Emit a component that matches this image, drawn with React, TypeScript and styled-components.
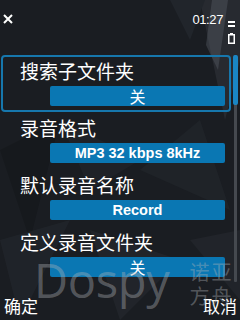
import React from "react";
import styled, { createGlobalStyle } from "styled-components";

const GlobalStyle = createGlobalStyle`
  html, body {
    margin: 0;
    padding: 0;
    background: #15181c;
  }
  * {
    box-sizing: border-box;
  }
`;

const Screen = styled.div`
  position: relative;
  width: 240px;
  height: 320px;
  overflow: hidden;
  background: #1a1d22;
  display: flex;
  flex-direction: column;
  font-family: "Noto Sans CJK SC", "Liberation Sans", sans-serif;
  color: #fff;
`;

const Backdrop = styled.svg`
  position: absolute;
  left: 0;
  top: 0;
  width: 240px;
  height: 320px;
  z-index: 0;
`;

const StatusBar = styled.div`
  position: relative;
  z-index: 1;
  height: 55px;
  display: flex;
  align-items: flex-start;
  padding: 14px 5px 0 3px;
`;

const Spacer = styled.div`
  flex: 1;
`;

const Clock = styled.div`
  font-family: "Liberation Sans", Arial, sans-serif;
  font-size: 13px;
  line-height: 13px;
  letter-spacing: -0.4px;
  margin-top: -1px;
`;

const Indicators = styled.div`
  display: flex;
  flex-direction: column;
  align-items: center;
  gap: 2px;
  margin-left: 5px;
  margin-top: 7px;
  width: 7px;
`;

const Bar = styled.span`
  display: block;
  width: 7px;
  height: 2px;
  background: #fff;
`;

const Body = styled.div`
  position: relative;
  z-index: 1;
  height: 228px;
  display: flex;
`;

const List = styled.div`
  width: 232px;
  padding-left: 1px;
  display: flex;
  flex-direction: column;
`;

const Item = styled.div<{ $selected?: boolean }>`
  width: 230px;
  height: 57px;
  border: 2px solid ${(p) => (p.$selected ? "#1677ad" : "transparent")};
  border-radius: 4px;
  padding: 4px 4px 0 17px;
  display: flex;
  flex-direction: column;
`;

const Label = styled.div`
  font-size: 19px;
  line-height: 19px;
  white-space: nowrap;
`;

const Value = styled.div<{ $latin?: boolean }>`
  margin: 6px 0 0 30px;
  width: 175px;
  height: 20px;
  border-radius: 2px;
  background: #0a77b3;
  text-align: center;
  line-height: 20px;
  font-family: ${(p) =>
    p.$latin
      ? `"Liberation Sans", Arial, sans-serif`
      : `"Noto Sans CJK SC", sans-serif`};
  font-size: ${(p) => (p.$latin ? "14.5px" : "16px")};
  font-weight: ${(p) => (p.$latin ? 700 : 400)};
`;

const ScrollTrack = styled.div`
  position: relative;
  margin-left: 1px;
  width: 5px;
  height: 227px;
  display: flex;
  justify-content: center;
`;

const TrackLine = styled.div`
  width: 3px;
  height: 100%;
  background: #45494f;
  border-radius: 1px;
`;

const Thumb = styled.div`
  position: absolute;
  left: 0;
  top: 0;
  width: 5px;
  height: 50px;
  border-radius: 2px;
  background: #1a86c4;
`;

const SoftKeys = styled.div`
  position: relative;
  z-index: 1;
  flex: 1;
  display: flex;
  align-items: flex-end;
  justify-content: space-between;
  padding: 0 3px 6px 4px;
  font-size: 17px;
  line-height: 17px;
`;

const Watermark = styled.div`
  position: absolute;
  z-index: 2;
  left: 34px;
  top: 255px;
  display: flex;
  align-items: flex-start;
  gap: 20px;
  color: rgba(175, 178, 182, 0.4);
  pointer-events: none;
`;

const WaterLogo = styled.div`
  font-family: "Open Sans", sans-serif;
  font-size: 47px;
  line-height: 50px;
  letter-spacing: -0.3px;
`;

const WaterChinese = styled.div`
  margin-top: 5px;
  font-size: 20px;
  line-height: 24px;
  width: 46px;
  letter-spacing: 2px;
`;

const CloseIcon = () => (
  <svg width="10" height="10" viewBox="0 0 10 10">
    <path d="M1 1 L9 9 M9 1 L1 9" stroke="#fff" strokeWidth="2" />
  </svg>
);

const Battery = () => (
  <svg width="7" height="11" viewBox="0 0 7 11" style={{ marginTop: 4 }}>
    <rect x="2" y="0" width="3" height="2" fill="#fff" />
    <rect x="0.75" y="1.75" width="5.5" height="8.5" fill="none" stroke="#fff" strokeWidth="1.5" />
  </svg>
);

const settings = [
  { label: "搜索子文件夹", value: "关", latin: false },
  { label: "录音格式", value: "MP3 32 kbps 8kHz", latin: true },
  { label: "默认录音名称", value: "Record", latin: true },
  { label: "定义录音文件夹", value: "关", latin: false },
];

export default function App() {
  return (
    <Screen>
      <GlobalStyle />
      <Backdrop viewBox="0 0 240 320">
        <polygon points="200,0 240,0 240,60 225,120" fill="#2a2e35" opacity="0.8" />
        <polygon points="212,0 228,0 218,70 206,45" fill="#5a5f68" opacity="0.4" />
        <polygon points="170,0 205,0 190,40" fill="#21252b" />
        <polygon points="0,150 60,120 30,240" fill="#16191d" />
        <polygon points="60,120 140,160 90,190" fill="#23272d" opacity="0.6" />
        <polygon points="140,170 200,120 230,210" fill="#1f2328" />
        <polygon points="0,240 70,220 20,320" fill="#22262c" opacity="0.7" />
        <polygon points="90,230 180,260 120,320" fill="#262a30" opacity="0.6" />
        <polygon points="190,240 240,230 240,300" fill="#282c32" opacity="0.5" />
      </Backdrop>
      <StatusBar>
        <CloseIcon />
        <Spacer />
        <Clock>01:27</Clock>
        <Indicators>
          <Bar />
          <Bar />
          <Battery />
        </Indicators>
      </StatusBar>
      <Body>
        <List>
          {settings.map((s, i) => (
            <Item key={s.label} $selected={i === 0}>
              <Label>{s.label}</Label>
              <Value $latin={s.latin}>{s.value}</Value>
            </Item>
          ))}
        </List>
        <ScrollTrack>
          <TrackLine />
          <Thumb />
        </ScrollTrack>
      </Body>
      <SoftKeys>
        <span>确定</span>
        <span>取消</span>
      </SoftKeys>
      <Watermark>
        <WaterLogo>Dospy</WaterLogo>
        <WaterChinese>诺亚方舟</WaterChinese>
      </Watermark>
    </Screen>
  );
}
